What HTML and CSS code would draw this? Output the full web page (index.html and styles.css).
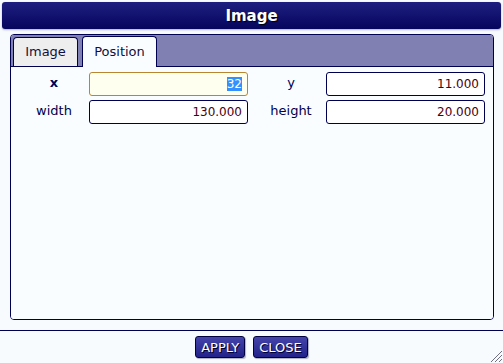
FILE: index.html
```html
<!DOCTYPE html>
<html lang="en">
<head>
    <meta charset="UTF-8">
    <title>Image</title>
    <link rel="stylesheet" href="styles.css">
</head>
<body>

<div class="dialog">
    <div class="titlebar">Image</div>

    <!-- Tabs -->
    <div class="tabbox">
        <div class="tabstrip">
            <div class="tab">Image</div>
            <div class="tab active">Position</div>
        </div>
        <div class="panel">
            <div class="fields">
                <label class="lbl bold">x</label>
                <input class="field focus" type="text" value="32">
                <label class="lbl">y</label>
                <input class="field" type="text" value="11.000">
                <label class="lbl">width</label>
                <input class="field" type="text" value="130.000">
                <label class="lbl">height</label>
                <input class="field" type="text" value="20.000">
            </div>
        </div>
    </div>

    <!-- Buttons -->
    <div class="footer">
        <button class="btn">APPLY</button>
        <button class="btn">CLOSE</button>
    </div>

    <svg class="grip" width="14" height="14" viewBox="0 0 14 14">
        <path d="M13 2 L2 13 M13 6 L6 13 M13 10 L10 13" stroke="#707080" stroke-width="1"/>
    </svg>
</div>

<script>
    var f = document.querySelector(".field.focus");
    f.focus();
    f.setSelectionRange(0, f.value.length);
</script>

</body>
</html>
```

FILE: styles.css
```css
html, body {
    margin: 0;
    padding: 0;
    background-color: #f8fbfe;
    font-family: "DejaVu Sans", Verdana, sans-serif;
    font-size: 13px;
    color: #000050;
}
.dialog {
    position: relative;
    width: 503px;
    height: 363px;
    display: flex;
    flex-direction: column;
    overflow: hidden;
}
.titlebar {
    margin: 2px 2px 0 2px;
    height: 27px;
    line-height: 28px;
    border-radius: 3px;
    background: linear-gradient(#1e1e80, #06065e);
    color: #fff;
    font-weight: bold;
    font-size: 15px;
    text-align: center;
    text-shadow: 1px 1px 1px #000;
    box-shadow: 0 1px 2px rgba(0, 0, 60, 0.3);
}
.tabbox {
    margin: 5px 9px 0 10px;
    height: 284px;
    border: 1px solid #000050;
    border-radius: 4px;
    display: flex;
    flex-direction: column;
    overflow: hidden;
}
.tabstrip {
    height: 31px;
    background-color: #8080b2;
    display: flex;
    align-items: flex-end;
    gap: 4px;
    padding-left: 2px;
    border-bottom: 1px solid #000050;
}
.tab {
    height: 28px;
    line-height: 27px;
    padding: 0 10px;
    width: 43px;
    text-align: center;
    background-color: #eeeeee;
    border: 1px solid #000050;
    border-bottom: none;
    border-radius: 4px 4px 0 0;
    color: #101040;
}
.tab.active {
    width: 53px;
    height: 30px;
    line-height: 29px;
    background-color: #fafdff;
    margin-bottom: -1px;
    position: relative;
}
.panel {
    flex: 1;
    background-color: #fafdff;
    padding-top: 5px;
}
.fields {
    display: grid;
    grid-template-columns: 78px 159px 78px 159px;
    row-gap: 4px;
}
.lbl {
    padding-left: 8px;
    text-align: center;
    align-self: center;
    margin-top: -4px;
    color: #000050;
}
.lbl.bold {
    font-weight: bold;
}
.field {
    box-sizing: border-box;
    width: 159px;
    height: 24px;
    margin: 0;
    padding: 0 5px;
    border: 1px solid #000050;
    border-radius: 3px;
    background-color: #fff;
    text-align: right;
    font-family: "DejaVu Sans", Verdana, sans-serif;
    font-size: 12px;
    color: #4a0010;
    outline: none;
}
.field.focus {
    background-color: #fffff0;
    border-color: #b8862e;
}
.field::selection {
    background-color: #3390ff;
    color: #fff;
}
.footer {
    margin-top: 10px;
    border-top: 1px solid #000050;
    padding-top: 5px;
    display: flex;
    justify-content: center;
    gap: 8px;
}
.btn {
    height: 22px;
    padding: 0 5px;
    border: 1px solid #000040;
    border-radius: 3px;
    background: linear-gradient(#4444aa, #22228a);
    color: #fff;
    font-family: "DejaVu Sans", Verdana, sans-serif;
    font-size: 13px;
    text-shadow: 1px 1px 0 #000030;
    box-shadow: 1px 1px 1px rgba(0, 0, 40, 0.3);
    cursor: pointer;
}
.grip {
    position: absolute;
    right: 0;
    bottom: 0;
}
```
